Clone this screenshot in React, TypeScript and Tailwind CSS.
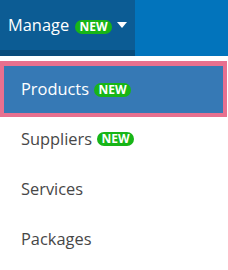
const NewBadge = () => (
  <span className="inline-flex h-[14px] w-[37px] items-center justify-center rounded-full bg-[#17b517] text-[12px] font-bold leading-none text-white">
    NEW
  </span>
);

const items = [
  { label: 'Products', isNew: true },
  { label: 'Suppliers', isNew: true },
  { label: 'Services', isNew: false },
  { label: 'Packages', isNew: false },
];

export default function App() {
  return (
    <div className="h-[270px] w-[228px] bg-white" style={{ fontFamily: '"Open Sans", "Noto Sans", sans-serif' }}>
      {/* Top nav */}
      <div className="flex h-[56px] bg-[#0274bc]">
        <button className="flex h-full w-[135px] items-center border-b-[6px] border-[#0a4c7b] bg-[#0c5c94] pl-[8px] text-[16.4px] text-white">
          <span>Manage</span>
          <span className="ml-[6px]">
            <NewBadge />
          </span>
          <svg width="10" height="6" viewBox="0 0 10 6" className="ml-[5px]">
            <path d="M0 0h10L5 6z" fill="#fff" />
          </svg>
        </button>
      </div>

      {/* Dropdown menu */}
      <ul className="pt-[5px] text-[16.4px] text-[#474747]">
        {items.map((item, i) =>
          i === 0 ? (
            <li
              key={item.label}
              className="mr-[1px] flex h-[56px] items-center gap-[5px] border-[4px] border-t-[5px] border-[#e8708f] bg-[#3679b5] pl-[17px] text-white"
            >
              <span>{item.label}</span>
              {item.isNew && <NewBadge />}
            </li>
          ) : (
            <li
              key={item.label}
              className={`flex h-[50px] items-center gap-[5px] pl-[21px] ${i === 1 ? '-mt-[3px]' : ''}`}
            >
              <span>{item.label}</span>
              {item.isNew && <NewBadge />}
            </li>
          )
        )}
      </ul>
    </div>
  );
}
